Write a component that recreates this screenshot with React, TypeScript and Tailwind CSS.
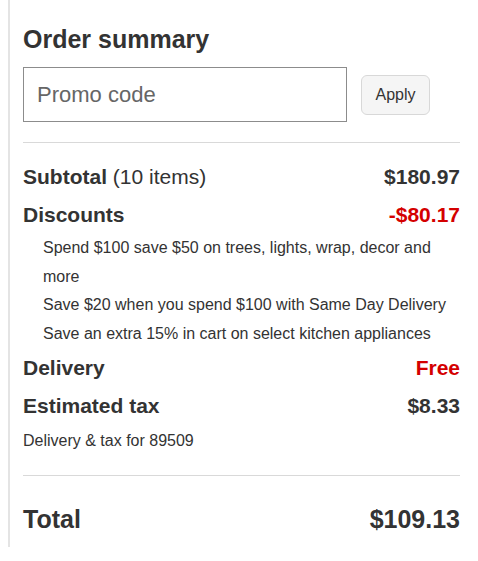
import React from 'react';

const font = { fontFamily: '"Liberation Sans", Arial, Helvetica, sans-serif' };

const discounts = [
  'Spend $100 save $50 on trees, lights, wrap, decor and more',
  'Save $20 when you spend $100 with Same Day Delivery',
  'Save an extra 15% in cart on select kitchen appliances',
];

const Row: React.FC<{ label: React.ReactNode; value: string; red?: boolean }> = ({ label, value, red }) => (
  <div className="flex items-center justify-between text-[21px] leading-[38px]">
    <div className="font-bold">{label}</div>
    <div className={`font-bold ${red ? 'text-[#d40000]' : ''}`}>{value}</div>
  </div>
);

const App: React.FC = () => {
  return (
    <div className="w-[478px] min-h-[561px] bg-white text-[#333]" style={font}>
      <div className="ml-2 border-l-2 border-[#e4e4e4] pl-[13px] pr-[18px] pt-[24px] pb-[13px]">
        <h2 className="text-[25px] leading-[30px] font-bold">Order summary</h2>

        {/* promo code */}
        <div className="mt-[13px] flex items-center gap-[14px]">
          <div className="h-[55px] w-[324px] border border-[#8c8c8c] flex items-center pl-[13px] text-[22px] text-[#666]">
            Promo code
          </div>
          <button className="h-[40px] w-[69px] rounded-md border border-[#d8d8d8] bg-[#f5f5f5] text-[16px] text-[#333]">
            Apply
          </button>
        </div>

        <div className="mt-[20px] border-t border-[#d9d9d9]" />

        <div className="mt-[15px]">
          <Row
            label={
              <>
                Subtotal <span className="font-normal">(10 items)</span>
              </>
            }
            value="$180.97"
          />
          <Row label="Discounts" value="-$80.17" red />
          <ul className="pl-5 text-[16px] leading-[28.5px]">
            {discounts.map((d) => (
              <li key={d}>{d}</li>
            ))}
          </ul>
          <div className="mt-[1px]">
            <Row label="Delivery" value="Free" red />
            <Row label="Estimated tax" value="$8.33" />
          </div>
          <p className="mt-[4px] text-[16px] leading-[24px]">Delivery &amp; tax for 89509</p>
        </div>

        <div className="mt-[22px] border-t border-[#d9d9d9]" />

        <div className="mt-[28px] flex items-center justify-between text-[25px] leading-[30px] font-bold">
          <span>Total</span>
          <span>$109.13</span>
        </div>
      </div>
    </div>
  );
};

export default App;
